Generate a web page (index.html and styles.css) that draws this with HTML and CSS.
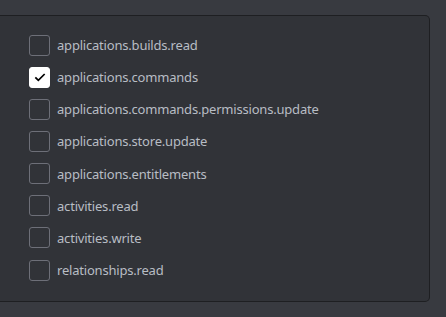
FILE: index.html
```html
<!DOCTYPE html>
<html lang="en">
<head>
    <meta charset="UTF-8">
    <title>Scopes</title>
    <link rel="stylesheet" href="styles.css">
</head>
<body>
    <div class="panel">
        <ul class="scope-list">
            <li class="scope"><span class="box"></span><span class="label">applications.builds.read</span></li>
            <li class="scope"><span class="box checked"><svg viewBox="0 0 24 24" width="16" height="16"><path d="M5 12.5l4.5 4.5L19 7.5" fill="none" stroke="#000" stroke-width="2.6"/></svg></span><span class="label">applications.commands</span></li>
            <li class="scope"><span class="box"></span><span class="label">applications.commands.permissions.update</span></li>
            <li class="scope"><span class="box"></span><span class="label">applications.store.update</span></li>
            <li class="scope"><span class="box"></span><span class="label">applications.entitlements</span></li>
            <li class="scope"><span class="box"></span><span class="label">activities.read</span></li>
            <li class="scope"><span class="box"></span><span class="label">activities.write</span></li>
            <li class="scope"><span class="box"></span><span class="label">relationships.read</span></li>
        </ul>
    </div>
</body>
</html>
```

FILE: styles.css
```css
body {
    margin: 0;
    padding: 15px 16px 16px 0;
    background-color: #383a40;
    font-family: 'Noto Sans', sans-serif;
}

.panel {
    background-color: #313338;
    border: 1px solid #1e1f22;
    border-left: none;
    border-radius: 0 5px 5px 0;
    padding: 13px 0 15px 29px;
}

.scope-list {
    list-style: none;
    margin: 0;
    padding: 0;
}

.scope {
    display: flex;
    align-items: center;
    gap: 7px;
    height: 32.15px;
}

.box {
    box-sizing: border-box;
    width: 21px;
    height: 21px;
    border: 1px solid #6d6f78;
    border-radius: 3px;
    display: flex;
    align-items: center;
    justify-content: center;
}

.box.checked {
    background-color: #fff;
    border-color: #fff;
}

.label {
    color: #b8bdc4;
    font-size: 13px;
    letter-spacing: -0.2px;
}
```
